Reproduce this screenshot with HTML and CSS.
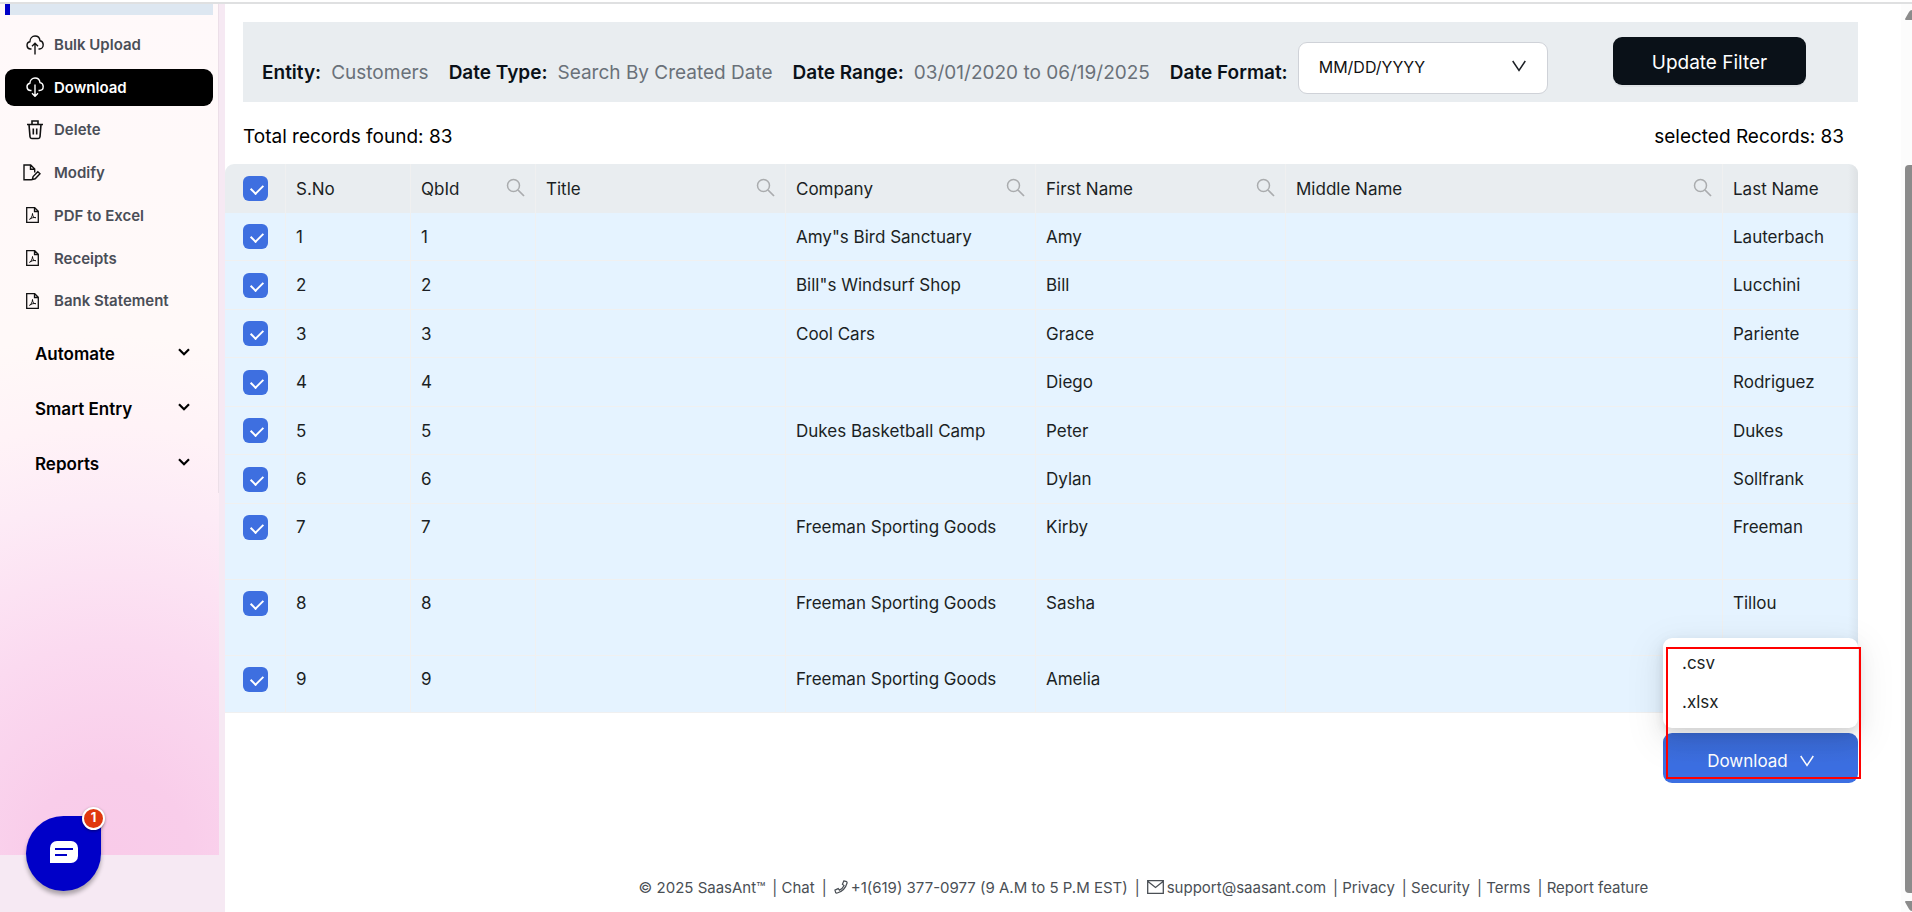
FILE: index.html
```html
<!DOCTYPE html>
<html lang="en">
<head>
    <meta charset="utf-8">
    <title>SaasAnt - Download</title>
    <meta name="viewport" content="width=device-width, initial-scale=1" />
    <link rel="stylesheet" href="styles.css">
</head>
<body>
    <svg class="sprite" width="0" height="0" aria-hidden="true">
        <symbol id="search" viewBox="0 0 19 19"><circle cx="7.5" cy="7.5" r="6" fill="none" stroke="currentColor" stroke-width="1.5" /><path d="M12 12l6 6" stroke="currentColor" stroke-width="1.7" /></symbol>
        <symbol id="chevron" viewBox="0 0 12 8"><path d="M1 1.2l5 5 5-5" fill="none" stroke="currentColor" stroke-width="2.2" /></symbol>
        <symbol id="thin-chevron" viewBox="0 0 14 12"><path d="M.7 1L7 10.500 13.300 1" fill="none" stroke="currentColor" stroke-width="1.500" /></symbol>
        <symbol id="pdf" viewBox="0 0 13 16"><path d="M.7.7h8L12.300 4.300v11H.7zM8.500.7v3.800h3.800" fill="none" stroke="currentColor" stroke-width="1.300" /><path d="M3.500 12.300c1.500-.6 3-3.300 3-5.800 0 2.600 1.200 4.200 3.300 4.200-2.200-.6-4.300.2-6.300 1.600z" fill="none" stroke="currentColor" stroke-width="1" /></symbol>
    </svg>

    <div class="page">
        <aside class="sidebar">
            <div class="sidebar-inner">
                <div class="sidebar-scroll">
                    <div class="current-group"></div>
                    <ul class="menu">
                        <li><a href="#"><svg viewBox="0 0 18 20"><path d="M5.500 14H4.500a3.700 3.700 0 0 1-.6-7.300C4 3.500 6.200 1 9 1c2.600 0 4.700 1.700 5 4.800 1.800.4 3.200 1.800 3.200 4 0 2.400-1.700 4.200-3.700 4.200h-1M9 19.500V8.500M6 11.300l3-3 3 3" /></svg>Bulk Upload</a></li>
                        <li><a href="#" class="active"><svg viewBox="0 0 18 20"><path d="M5.500 13.500H4.500a3.700 3.700 0 0 1-.6-7.300C4 3.200 6.200 1 9 1c2.600 0 4.700 1.700 5 4.600 1.800.4 3.200 1.800 3.200 4 0 2.300-1.700 3.900-3.700 3.900h-1M9 7.500v11.500M6 16.300l3 3 3-3" /></svg>Download</a></li>
                        <li><a href="#"><svg viewBox="0 0 18 20"><path d="M1 4.500h16M6 4.500V1h6v3.500M3 4.500l1 12.300c.1 1.300.7 1.700 1.700 1.700h6.600c1 0 1.600-.4 1.700-1.700l1-12.300M7.300 8.500v6M10.700 8.500v6" stroke-width="1.600" /></svg>Delete</a></li>
                        <li><a href="#"><svg class="wide" viewBox="0 0 18 17"><path d="M9 15.800H1V1h6.700l4 4v3.500M7.500 1v4.200h4M9.300 15.500l.8-3 4.700-4.800 2.200 2.100-4.800 5z" /></svg>Modify</a></li>
                        <li><a href="#"><svg class="doc"><use href="#pdf" /></svg>PDF to Excel</a></li>
                        <li><a href="#"><svg class="doc"><use href="#pdf" /></svg>Receipts</a></li>
                        <li><a href="#"><svg class="doc"><use href="#pdf" /></svg>Bank Statement</a></li>
                    </ul>
                    <div class="groups">
                        <button type="button">Automate <svg><use href="#chevron" /></svg></button>
                        <button type="button">Smart Entry <svg><use href="#chevron" /></svg></button>
                        <button type="button">Reports <svg><use href="#chevron" /></svg></button>
                    </div>
                </div>
            </div>
            <button type="button" class="chat" aria-label="Open chat">
                <svg viewBox="0 0 28 22"><path d="M7 0h14a7 7 0 0 1 7 7v8a7 7 0 0 1-7 7H0V7a7 7 0 0 1 7-7z" fill="#fff" /><path d="M5 8h18M5 14h12" stroke="#0000c8" stroke-width="2" /></svg>
                <span class="chat-count">1</span>
            </button>
        </aside>

        <main class="content">
            <section class="filter-bar">
                <div class="filters">
                    <p><b>Entity:</b> <span>Customers</span></p>
                    <p><b>Date Type:</b> <span>Search By Created Date</span></p>
                    <p><b>Date Range:</b> <span>03/01/2020 to 06/19/2025</span></p>
                    <label for="date-format">Date Format:</label>
                </div>
                <div class="select">
                    <select id="date-format">
                        <option>MM/DD/YYYY</option>
                        <option>DD/MM/YYYY</option>
                    </select>
                    <svg><use href="#thin-chevron" /></svg>
                </div>
                <button type="button" class="update">Update Filter</button>
            </section>

            <div class="counts">
                <span>Total records found: 83</span>
                <span>selected Records: 83</span>
            </div>

            <div class="table-container">
                <table>
                    <thead>
                        <tr>
                            <th class="check"><input type="checkbox" aria-label="Select all" checked></th>
                            <th class="narrow">S.No</th>
                            <th class="narrow"><div>QbId <svg><use href="#search" /></svg></div></th>
                            <th class="medium"><div>Title <svg><use href="#search" /></svg></div></th>
                            <th class="medium"><div>Company <svg><use href="#search" /></svg></div></th>
                            <th class="medium"><div>First Name <svg><use href="#search" /></svg></div></th>
                            <th><div>Middle Name <svg><use href="#search" /></svg></div></th>
                            <th class="last">Last Name</th>
                        </tr>
                    </thead>
                    <tbody>
                        <tr><td><input type="checkbox" aria-label="Select row 1" checked></td><td>1</td><td>1</td><td></td><td>Amy"s Bird Sanctuary</td><td>Amy</td><td></td><td>Lauterbach</td></tr>
                        <tr><td><input type="checkbox" aria-label="Select row 2" checked></td><td>2</td><td>2</td><td></td><td>Bill"s Windsurf Shop</td><td>Bill</td><td></td><td>Lucchini</td></tr>
                        <tr><td><input type="checkbox" aria-label="Select row 3" checked></td><td>3</td><td>3</td><td></td><td>Cool Cars</td><td>Grace</td><td></td><td>Pariente</td></tr>
                        <tr><td><input type="checkbox" aria-label="Select row 4" checked></td><td>4</td><td>4</td><td></td><td></td><td>Diego</td><td></td><td>Rodriguez</td></tr>
                        <tr><td><input type="checkbox" aria-label="Select row 5" checked></td><td>5</td><td>5</td><td></td><td>Dukes Basketball Camp</td><td>Peter</td><td></td><td>Dukes</td></tr>
                        <tr><td><input type="checkbox" aria-label="Select row 6" checked></td><td>6</td><td>6</td><td></td><td></td><td>Dylan</td><td></td><td>Sollfrank</td></tr>
                        <tr class="tall"><td><input type="checkbox" aria-label="Select row 7" checked></td><td>7</td><td>7</td><td></td><td>Freeman Sporting Goods</td><td>Kirby</td><td></td><td>Freeman</td></tr>
                        <tr class="tall"><td><input type="checkbox" aria-label="Select row 8" checked></td><td>8</td><td>8</td><td></td><td>Freeman Sporting Goods</td><td>Sasha</td><td></td><td>Tillou</td></tr>
                        <tr class="cut"><td><input type="checkbox" aria-label="Select row 9" checked></td><td>9</td><td>9</td><td></td><td>Freeman Sporting Goods</td><td>Amelia</td><td></td><td></td></tr>
                    </tbody>
                </table>
            </div>

            <div class="download">
                <div class="download-menu">
                    <a href="#">.csv</a>
                    <a href="#">.xlsx</a>
                </div>
                <button type="button">Download <svg><use href="#thin-chevron" /></svg></button>
                <div class="highlight"></div>
            </div>

            <footer>
                <span>© 2025 SaasAnt™</span>
                <span>| <a href="#">Chat</a></span>
                <span>|</span>
                <a href="#"><svg class="phone" viewBox="0 0 15 15"><path d="M10.500 1l3 .8c.5.300.6 1 .4 1.700C12.500 8.500 8.500 12.500 3.500 13.900c-.7.200-1.400.1-1.700-.4L1 10.800l3.500-1.600 1.400 1.700c2-.9 4-2.900 4.900-4.900L9 4.500z" /></svg>+1(619) 377-0977 (9 A.M to 5 P.M EST)</a>
                <span>|</span>
                <a href="#"><svg class="mail" viewBox="0 0 17 14"><path d="M.7.7h15.600v12.600H.7zM1 1.500l7.500 6 7.500-6" /></svg>support@saasant.com</a>
                <span>| <a href="#">Privacy</a></span>
                <span>| <a href="#">Security</a></span>
                <span>| <a href="#">Terms</a></span>
                <span>| <a href="#">Report feature</a></span>
            </footer>
        </main>

        <div class="scrollbar">
            <svg viewBox="0 0 7 10"><path d="M0 9l4-7q1-2 3-2v10H1Q0 10 0 9z" /></svg>
            <div class="thumb"></div>
            <svg viewBox="0 0 7 10"><path d="M0 1l4 7q1 2 3 2V0H1Q0 0 0 1z" /></svg>
        </div>
    </div>
</body>
</html>
```

FILE: styles.css
```css
* {
    box-sizing: border-box;
}

body {
    font-family: Inter, "Liberation Sans", Arial, sans-serif;
    font-size: 17px;
    color: #1b1f24;
    margin: 0;
    padding-top: 2px;
    background-color: #fff;
}

a {
    color: inherit;
    text-decoration: none;
}

button {
    font: inherit;
    border: none;
    cursor: pointer;
}

.sprite {
    position: absolute;
}

.page {
    display: flex;
    height: calc(100vh - 2px);
    border-top: 2px solid #dfe0e1;
    overflow: hidden;
}

/* sidebar */
.sidebar {
    flex: 0 0 225px;
    position: relative;
    background-color: #f6e9f3;
}

.sidebar-inner {
    width: 219px;
    height: calc(100% - 57px);
    background: radial-gradient(circle at 110px 100%, #f9cbe9 0, #f9cdea 80px, #fbdaf0 210px, #fdebf6 350px, #fff3f7 430px, #fff9f8 520px, #fff9fa 100%);
}

.sidebar-scroll {
    height: 489px;
    border-right: 1px solid #ecdfe8;
}

.current-group {
    height: 11px;
    margin: 0 5px;
    border-left: 5px solid #0000c8;
    background-color: #dde7f1;
}

.menu {
    list-style: none;
    display: flex;
    flex-direction: column;
    height: 310px;
    margin: 0;
    padding: 11px 5px 0;
}

.menu li {
    flex: 1;
}

.menu a {
    display: grid;
    grid-template-columns: 49px 1fr;
    align-items: center;
    height: 37px;
    border-radius: 9px;
    font-size: 15px;
    font-weight: 600;
    color: #4a4e57;
}

.menu a.active {
    background-color: #000;
    color: #fff;
}

.menu svg {
    width: 18px;
    height: 20px;
    margin-left: 21px;
    fill: none;
    stroke: #111;
    stroke-width: 1.4;
    color: #111;
}

.menu .active svg {
    stroke: #fff;
}

.menu svg.wide {
    height: 17px;
    margin-left: 18px;
}

.menu svg.doc {
    width: 13px;
    height: 16px;
    stroke: none;
}

.groups {
    margin-top: 1px;
}

.groups button {
    display: flex;
    align-items: center;
    justify-content: space-between;
    width: 100%;
    height: 55px;
    padding: 0 28px 0 35px;
    background: none;
    font-size: 17px;
    font-weight: 600;
    color: #000;
}

.groups svg {
    width: 12px;
    height: 8px;
    margin-bottom: 4px;
}

.chat {
    position: absolute;
    left: 26px;
    bottom: 21px;
    width: 75px;
    height: 75px;
    border-radius: 38px 4px 38px 38px;
    background-color: #0000c8;
    box-shadow: 0 4px 4px rgba(0, 0, 0, 0.3);
}

.chat svg {
    width: 28px;
    height: 22px;
}

.chat-count {
    position: absolute;
    top: -9px;
    right: -4px;
    width: 23px;
    height: 23px;
    border: 2px solid #fff;
    border-radius: 50%;
    background-color: #e0380f;
    color: #fff;
    font-size: 13px;
    font-weight: bold;
    line-height: 17px;
    box-shadow: 0 1px 3px rgba(0, 0, 0, 0.4);
}

/* content */
.content {
    flex: 1;
    display: flex;
    flex-direction: column;
    min-width: 0;
    padding: 18px 43px 0 0;
}

.filter-bar {
    display: flex;
    align-items: flex-start;
    height: 80px;
    margin-left: 18px;
    padding: 0 52px 0 19px;
    background-color: #e9edf0;
    white-space: nowrap;
}

.filters {
    display: flex;
    gap: 20px;
    padding-top: 39px;
    font-size: 19px;
    line-height: 24px;
}

.filters p {
    display: flex;
    gap: 10px;
    margin: 0;
    color: #6a7179;
}

.filters b, .filters label {
    font-weight: 600;
    color: #0a1118;
}

.select {
    position: relative;
    width: 250px;
    margin: 20px 0 0 10px;
}

.select select {
    appearance: none;
    width: 100%;
    height: 52px;
    padding: 0 20px 2px;
    border: 1px solid #cfd2d8;
    border-radius: 9px;
    background-color: #fff;
    font: inherit;
    font-size: 16px;
    color: #111;
}

.select svg {
    position: absolute;
    right: 22px;
    top: 18px;
    width: 14px;
    height: 12px;
}

.update {
    width: 193px;
    height: 48px;
    margin: 15px 0 0 auto;
    padding: 2px 0 0;
    border-radius: 9px;
    background-color: #0a1118;
    color: #fff;
    font-size: 19px;
    box-shadow: 0 2px 0 rgba(5, 5, 5, 0.04);
}

.counts {
    display: flex;
    justify-content: space-between;
    padding: 23px 14px 0 18px;
    font-size: 19px;
    line-height: 24px;
    color: #000;
}

/* records */
.table-container {
    margin-top: 15px;
    position: relative;
}

.table-container::after {
    content: "";
    position: absolute;
    top: 0;
    right: 0;
    bottom: 0;
    width: 10px;
    background: linear-gradient(to right, rgba(5, 5, 5, 0), rgba(5, 5, 5, 0.05));
    border-top-right-radius: 9px;
}

table {
    width: 100%;
    table-layout: fixed;
    border-collapse: separate;
    border-spacing: 0;
}

th, td {
    height: 48px;
    padding: 0 10px;
    border-right: 1px solid #f0f0f0;
    border-bottom: 1px solid #f0f0f0;
    text-align: left;
    font-weight: normal;
}

th:last-child, td:last-child {
    border-right: none;
}

th {
    height: 49px;
    border-bottom: none;
    background-color: #e9edf0;
}

th:first-child {
    border-top-left-radius: 9px;
}

th:last-child {
    border-top-right-radius: 9px;
}

td {
    background-color: #e5f3ff;
}

tr:nth-child(even) td {
    height: 49px;
}

tr.tall td, tr.cut td {
    height: 76px;
    padding-top: 11px;
    vertical-align: top;
    line-height: 25px;
}

tr.cut td {
    height: 57px;
}

.check {
    width: 61px;
}

.narrow {
    width: 125px;
}

.medium {
    width: 250px;
}

.last {
    width: 135px;
}

th:first-child, td:first-child {
    padding-left: 18px;
}

th div {
    display: flex;
    justify-content: space-between;
    align-items: center;
}

th svg {
    width: 19px;
    height: 19px;
    margin-bottom: 3px;
    color: #aaacae;
}

input[type="checkbox"] {
    appearance: none;
    display: block;
    width: 25px;
    height: 25px;
    margin: 0;
    border-radius: 6px;
    background-color: #3e6fe0;
}

input[type="checkbox"]:checked::before {
    content: "";
    display: block;
    width: 6px;
    height: 10px;
    margin: 6px 0 0 10px;
    border: solid #fff;
    border-width: 0 2px 2px 0;
    transform: rotate(45deg);
}

/* download */
.download {
    align-self: flex-end;
    position: relative;
    width: 195px;
    margin-top: 20px;
}

.download button {
    display: flex;
    align-items: center;
    justify-content: center;
    gap: 12px;
    width: 100%;
    height: 50px;
    padding: 5px 0 0;
    border-radius: 9px;
    background: linear-gradient(#3a69d3, #3c6fe2 60%);
    color: #fff;
}

.download svg {
    width: 14px;
    height: 12px;
}

.download-menu {
    position: absolute;
    bottom: 55px;
    width: 100%;
    height: 90px;
    padding: 6px 19px;
    border-radius: 9px;
    background-color: #fff;
    box-shadow: 0 7px 20px rgba(0, 0, 0, 0.08), 0 4px 8px rgba(0, 0, 0, 0.08), 0 11px 35px 10px rgba(0, 0, 0, 0.05);
}

.download-menu a {
    display: block;
    line-height: 39px;
}

.highlight {
    position: absolute;
    top: -86px;
    left: 3px;
    width: 195px;
    height: 132px;
    border: 2px solid #f00;
    pointer-events: none;
}

footer {
    display: flex;
    justify-content: center;
    gap: 7px;
    margin-top: auto;
    padding: 0 0 12px 204px;
    font-size: 15px;
    line-height: 24px;
    color: #4a4f55;
    white-space: nowrap;
}

footer svg {
    height: 14px;
    margin-right: 3px;
    vertical-align: -1px;
    fill: none;
    stroke: #4a4f55;
    stroke-width: 1.3;
}

.phone {
    width: 14px;
}

.mail {
    width: 17px;
}

/* scrollbar */
.scrollbar {
    flex: 0 0 11px;
    display: flex;
    flex-direction: column;
    align-items: flex-end;
    padding: 6px 0 1px;
    background-color: #fcfcfc;
}

.scrollbar svg {
    width: 7px;
    height: 10px;
    fill: #8b8b8b;
}

.thumb {
    flex: 1;
    width: 7px;
    margin: 145px 0 8px;
    border-radius: 4px 0 0 4px;
    background-color: #8b8b8b;
}
```
